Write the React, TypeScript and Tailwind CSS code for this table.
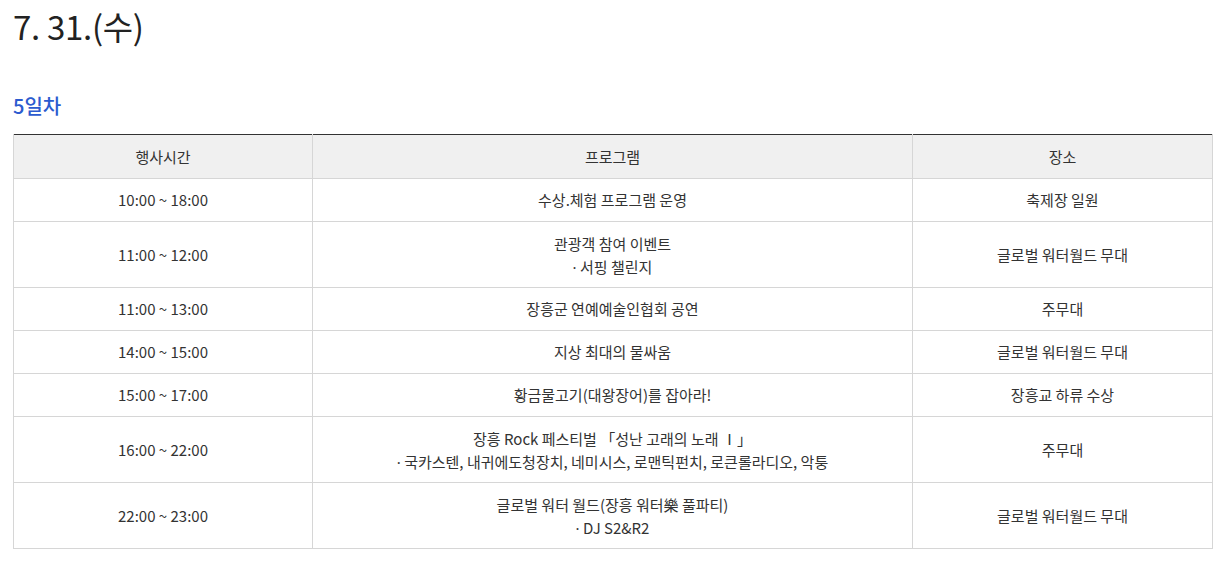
import React from 'react';

const rows: { time: string; program: string[]; place: string }[] = [
  { time: '10:00 ~ 18:00', program: ['수상.체험 프로그램 운영'], place: '축제장 일원' },
  { time: '11:00 ~ 12:00', program: ['관광객 참여 이벤트', '· 서핑 챌린지'], place: '글로벌 워터월드 무대' },
  { time: '11:00 ~ 13:00', program: ['장흥군 연예예술인협회 공연'], place: '주무대' },
  { time: '14:00 ~ 15:00', program: ['지상 최대의 물싸움'], place: '글로벌 워터월드 무대' },
  { time: '15:00 ~ 17:00', program: ['황금물고기(대왕장어)를 잡아라!'], place: '장흥교 하류 수상' },
  {
    time: '16:00 ~ 22:00',
    program: ['장흥 Rock 페스티벌 「성난 고래의 노래 Ⅰ」', '· 국카스텐, 내귀에도청장치, 네미시스, 로맨틱펀치, 로큰롤라디오, 악퉁'],
    place: '주무대',
  },
  { time: '22:00 ~ 23:00', program: ['글로벌 워터 월드(장흥 워터樂 풀파티)', '· DJ S2&R2'], place: '글로벌 워터월드 무대' },
];

// the leading dot is drawn in the latin font so it stays narrow
const Line = ({ text }: { text: string }) =>
  text.startsWith('· ') ? (
    <div>
      <span className="font-['Noto_Sans',sans-serif]">·</span> {text.slice(2)}
    </div>
  ) : (
    <div>{text}</div>
  );

export default function App() {
  return (
    <div className="bg-white px-[13px] pt-[6px] pb-4 font-['Noto_Sans_CJK_KR','Noto_Sans',sans-serif] text-[#333]">
      <h2 className="text-[33px] leading-[40px] font-normal text-[#222] tracking-[-0.3px]">7. 31.(수)</h2>
      <h3 className="mt-[46px] text-[20px] leading-[28px] font-medium text-[#2c5bcf]">5일차</h3>
      <table className="mt-[14px] w-[1200px] border-collapse border-t border-t-[#333] text-[15px] leading-[22px] text-center table-fixed">
        <colgroup>
          <col className="w-[299px]" />
          <col className="w-[600px]" />
          <col />
        </colgroup>
        <thead>
          <tr className="bg-[#f0f0f0]">
            <th className="border-x border-b border-[#d6d6d6] h-[44px] font-normal text-[#333]">행사시간</th>
            <th className="border-x border-b border-[#d6d6d6] font-normal text-[#333]">프로그램</th>
            <th className="border-x border-b border-[#d6d6d6] font-normal text-[#333]">장소</th>
          </tr>
        </thead>
        <tbody>
          {rows.map((r, i) => (
            <tr key={i}>
              <td className="border border-[#d6d6d6] py-[10px]">{r.time}</td>
              <td
                className={
                  r.program.length > 1
                    ? 'border border-[#d6d6d6] pt-[10px] pb-[8px] leading-[23px]'
                    : 'border border-[#d6d6d6] py-[10px]'
                }
              >
                {r.program.map((p, j) => (
                  <Line key={j} text={p} />
                ))}
              </td>
              <td className="border border-[#d6d6d6] py-[10px]">{r.place}</td>
            </tr>
          ))}
        </tbody>
      </table>
    </div>
  );
}
